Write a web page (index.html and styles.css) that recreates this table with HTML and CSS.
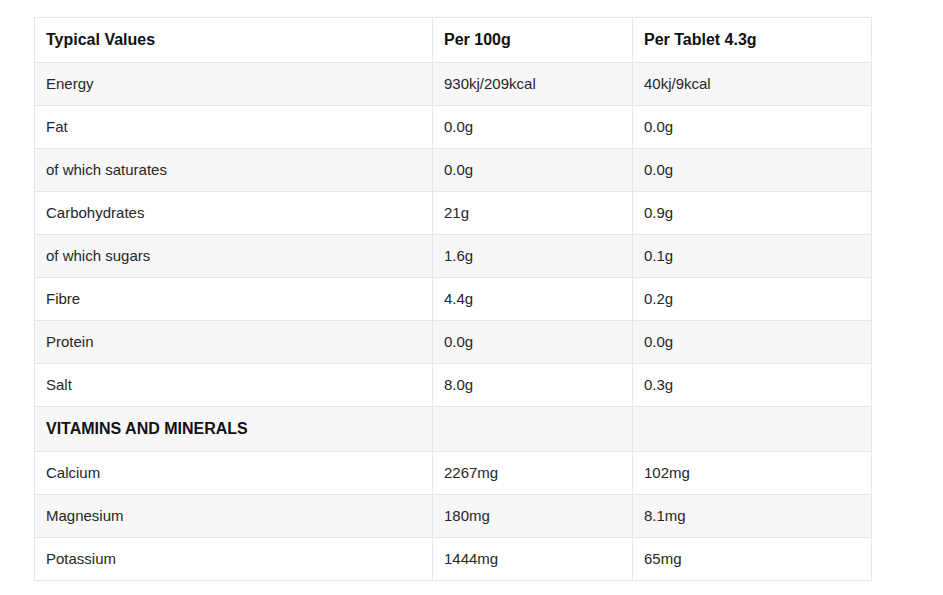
FILE: index.html
```html
<!DOCTYPE html>
<html>
<head>
<meta charset="utf-8">
<link rel="stylesheet" href="styles.css">
</head>
<body>
<div class="wrap">
<table class="nutrition">
  <colgroup>
    <col class="c1"><col class="c2"><col class="c3">
  </colgroup>
  <thead>
    <tr class="head"><th>Typical Values</th><th>Per 100g</th><th>Per Tablet 4.3g</th></tr>
  </thead>
  <tbody>
    <tr><td>Energy</td><td>930kj/209kcal</td><td>40kj/9kcal</td></tr>
    <tr><td>Fat</td><td>0.0g</td><td>0.0g</td></tr>
    <tr><td>of which saturates</td><td>0.0g</td><td>0.0g</td></tr>
    <tr><td>Carbohydrates</td><td>21g</td><td>0.9g</td></tr>
    <tr><td>of which sugars</td><td>1.6g</td><td>0.1g</td></tr>
    <tr><td>Fibre</td><td>4.4g</td><td>0.2g</td></tr>
    <tr><td>Protein</td><td>0.0g</td><td>0.0g</td></tr>
    <tr><td>Salt</td><td>8.0g</td><td>0.3g</td></tr>
    <tr class="section"><td>VITAMINS AND MINERALS</td><td></td><td></td></tr>
    <tr><td>Calcium</td><td>2267mg</td><td>102mg</td></tr>
    <tr><td>Magnesium</td><td>180mg</td><td>8.1mg</td></tr>
    <tr><td>Potassium</td><td>1444mg</td><td>65mg</td></tr>
  </tbody>
</table>
</div>
</body>
</html>
```
FILE: styles.css
```css
html, body {
  margin: 0;
  padding: 0;
  background: #ffffff;
}
.wrap {
  padding: 17px 0 0 34px;
}
.nutrition {
  border-collapse: collapse;
  table-layout: fixed;
  width: 837px;
  font-family: "Liberation Sans", Arial, sans-serif;
  font-size: 15px;
  color: #262626;
}
.c1 { width: 398px; }
.c2 { width: 200px; }
.c3 { width: 239px; }
.nutrition th,
.nutrition td {
  border: 1px solid #e6e6e6;
  padding: 12px 11px 12px 11px;
  line-height: 18px;
  height: 18px;
  text-align: left;
  vertical-align: middle;
}
.nutrition th {
  font-weight: bold;
  font-size: 16px;
  color: #111111;
  padding-top: 13px;
  padding-bottom: 13px;
}
.nutrition tbody tr:nth-child(odd) td {
  background: #f7f7f7;
}
.nutrition .section td {
  font-weight: bold;
  font-size: 16px;
  color: #111111;
  padding-top: 13px;
  padding-bottom: 13px;
}
```
